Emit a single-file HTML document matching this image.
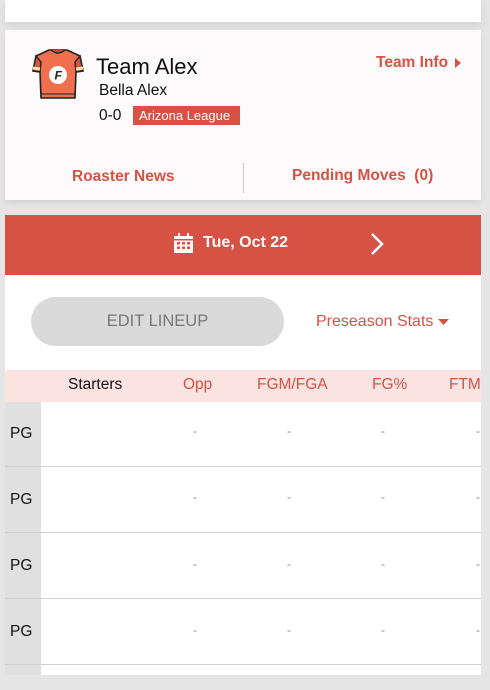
<!DOCTYPE html>
<html><head><meta charset="utf-8"><style>
*{margin:0;padding:0;box-sizing:border-box}
body{width:490px;height:690px;background:#e5e5e5;font-family:"Liberation Sans",Roboto,sans-serif;position:relative;overflow:hidden}
.a{position:absolute}
.red{color:#d65244}
.d{position:absolute;font-size:12px;color:#888}
</style></head><body>
<div class="a" style="left:5px;top:0;width:476px;height:22px;background:#fff;box-shadow:0 4px 8px rgba(0,0,0,.08)"></div>
<div class="a" style="left:5px;top:30px;width:476px;height:170px;background:#fcfafb;box-shadow:0 3px 6px rgba(0,0,0,.08)"></div>
<svg class="a" style="left:32px;top:48px" width="52" height="52" viewBox="0 0 52 52">
<path d="M17 2 L35 2 L48 8 L51 23 L44 24 L43 50 L9 50 L8 24 L1 23 L4 8 Z" fill="#ef6f4e" stroke="#222" stroke-width="1.6" stroke-linejoin="round"/>
<path d="M4 8 L1 23 L8 24 L9 14 Z M48 8 L51 23 L44 24 L43 14 Z" fill="#d4553a" stroke="#222" stroke-width="1.4"/>
<path d="M1 20 L8 21 M51 20 L44 21" stroke="#f5e6b0" stroke-width="3"/>
<path d="M19 2 Q26 8 33 2" fill="#c94a33" stroke="#222" stroke-width="1.4"/>
<path d="M9 46 L43 46" stroke="#222" stroke-width="1"/>
<circle cx="26" cy="27" r="9" fill="#fff"/>
<text x="22.5" y="31.5" font-family="Liberation Sans" font-weight="bold" font-style="italic" font-size="12" fill="#222">F</text>
</svg>
<div class="a" style="left:96px;top:54px;font-size:22px;color:#111">Team Alex</div>
<div class="a" style="left:99px;top:82px;font-size:15.5px;color:#111">Bella Alex</div>
<div class="a" style="left:99px;top:107px;font-size:15.5px;color:#111">0-0</div>
<div class="a" style="left:133px;top:106px;width:107px;height:19px;background:#d65244;color:#fff;font-size:13px;line-height:19px;padding-left:6px">Arizona League</div>
<div class="a red" style="left:376px;top:54px;font-size:15.5px;font-weight:bold">Team Info</div>
<svg class="a" style="left:455px;top:58px" width="6" height="10"><path d="M0 0 L6 5 L0 10Z" fill="#d65244"/></svg>
<div class="a red" style="left:72px;top:168px;font-size:15.5px;font-weight:bold">Roaster News</div>
<div class="a" style="left:243px;top:163px;width:1px;height:30px;background:#ccc"></div>
<div class="a red" style="left:292px;top:167px;font-size:15.5px;font-weight:bold">Pending Moves&nbsp;&nbsp;(0)</div>
<div class="a" style="left:5px;top:215px;width:476px;height:60px;background:#d65244"></div>
<svg class="a" style="left:174px;top:233px" width="19" height="20" viewBox="0 0 19 20"><rect x="0" y="3" width="19" height="17" fill="#fff"/><rect x="4" y="0" width="2" height="5" fill="#fff"/><rect x="13" y="0" width="2" height="5" fill="#fff"/><g fill="#d65244"><rect x="0" y="6" width="19" height="1.5"/><rect x="3" y="9" width="3" height="2.5"/><rect x="8" y="9" width="3" height="2.5"/><rect x="13" y="9" width="3" height="2.5"/><rect x="3" y="13.5" width="3" height="2.5"/><rect x="8" y="13.5" width="3" height="2.5"/><rect x="13" y="13.5" width="3" height="2.5"/></g></svg>
<div class="a" style="left:203px;top:234px;font-size:16px;font-weight:bold;color:#fff">Tue, Oct 22</div>
<svg class="a" style="left:370px;top:233px" width="14" height="22"><path d="M2 1 L12 11 L2 21" stroke="#fff" stroke-width="2.5" fill="none"/></svg>
<div class="a" style="left:5px;top:275px;width:476px;height:95px;background:#fff"></div>
<div class="a" style="left:31px;top:297px;width:253px;height:49px;border-radius:25px;background:#dadada;color:#777;font-size:16.5px;text-align:center;line-height:49px">EDIT LINEUP</div>
<div class="a red" style="left:316px;top:313px;font-size:16px">Preseason Stats</div>
<svg class="a" style="left:438px;top:319px" width="11" height="6"><path d="M0 0 L11 0 L5.5 6Z" fill="#d65244"/></svg>
<div class="a" style="left:5px;top:370px;width:476px;height:32px;background:#fae3e1"></div>
<div class="a" style="left:68px;top:376px;font-size:15.5px;color:#111">Starters</div>
<div class="a red" style="left:183px;top:376px;font-size:15.5px">Opp</div>
<div class="a red" style="left:257px;top:376px;font-size:15.5px">FGM/FGA</div>
<div class="a red" style="left:372px;top:376px;font-size:15.5px">FG%</div>
<div class="a red" style="left:449px;top:376px;font-size:15.5px;width:32px;overflow:hidden;white-space:nowrap">FTM</div>
<div class="a" style="left:5px;top:402px;width:476px;height:273px;background:#fff"></div>
<div class="a" style="left:5px;top:402px;width:36px;height:273px;background:#e0e0e0"></div>
<div class="a" style="left:5px;top:466px;width:476px;height:1px;background:#d2d2d2"></div>
<div class="a" style="left:5px;top:532px;width:476px;height:1px;background:#d2d2d2"></div>
<div class="a" style="left:5px;top:598px;width:476px;height:1px;background:#d2d2d2"></div>
<div class="a" style="left:5px;top:664px;width:476px;height:1px;background:#d2d2d2"></div>
<div class="a" style="left:10px;top:425px;font-size:15.5px;color:#111">PG</div>
<div class="a" style="left:10px;top:491px;font-size:15.5px;color:#111">PG</div>
<div class="a" style="left:10px;top:557px;font-size:15.5px;color:#111">PG</div>
<div class="a" style="left:10px;top:623px;font-size:15.5px;color:#111">PG</div>
<div class="d" style="left:193px;top:424px">-</div><div class="d" style="left:287px;top:424px">-</div><div class="d" style="left:381px;top:424px">-</div><div class="d" style="left:476px;top:424px">-</div>
<div class="d" style="left:193px;top:490px">-</div><div class="d" style="left:287px;top:490px">-</div><div class="d" style="left:381px;top:490px">-</div><div class="d" style="left:476px;top:490px">-</div>
<div class="d" style="left:193px;top:557px">-</div><div class="d" style="left:287px;top:557px">-</div><div class="d" style="left:381px;top:557px">-</div><div class="d" style="left:476px;top:557px">-</div>
<div class="d" style="left:193px;top:623px">-</div><div class="d" style="left:287px;top:623px">-</div><div class="d" style="left:381px;top:623px">-</div><div class="d" style="left:476px;top:623px">-</div>
<div class="a" style="left:481px;top:402px;width:9px;height:273px;background:#e5e5e5"></div>
</body></html>
